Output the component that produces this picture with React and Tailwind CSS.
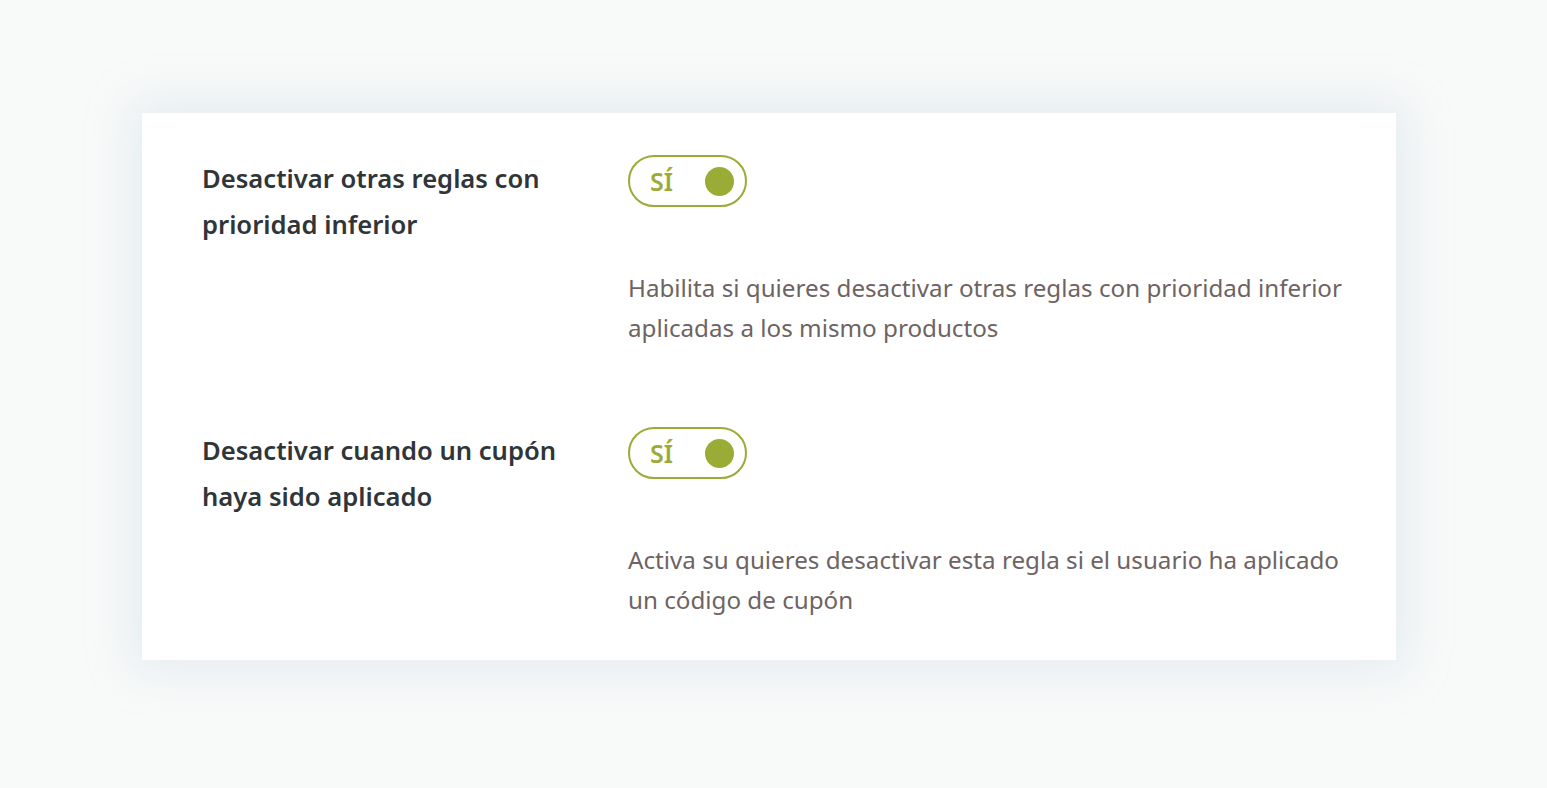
import { useState } from 'react'

const RULES = [
  {
    id: 'lower-priority',
    label: 'Desactivar otras reglas con prioridad inferior',
    help: 'Habilita si quieres desactivar otras reglas con prioridad inferior aplicadas a los mismo productos',
  },
  {
    id: 'coupon',
    label: 'Desactivar cuando un cupón haya sido aplicado',
    help: 'Activa su quieres desactivar esta regla si el usuario ha aplicado un código de cupón',
  },
]

function Toggle({ on, onChange }) {
  return (
    <button
      type="button"
      onClick={() => onChange(!on)}
      className="flex h-[52px] w-[119px] items-center justify-between rounded-full border-2 border-[#9bac36] bg-white pl-[20px] pr-[11px]"
    >
      <span className="text-[25px] font-semibold leading-none text-[#9bac36]">{on ? 'SÍ' : 'NO'}</span>
      <span className={on ? 'h-[29px] w-[29px] rounded-full bg-[#9bac36]' : 'h-[29px] w-[29px] rounded-full bg-gray-300'} />
    </button>
  )
}

export default function App() {
  const [values, setValues] = useState({ 'lower-priority': true, coupon: true })

  return (
    <div
      className="min-h-screen bg-[#f8f9f9] pl-[142px] pt-[113px]"
      style={{ fontFamily: '"Noto Sans", "Open Sans", sans-serif' }}
    >
      <div className="flex w-[1254px] flex-col gap-[79px] bg-white pb-[40px] pl-[60px] pr-[38px] pt-[42px] shadow-[0_0_40px_10px_rgba(200,218,228,0.4)]">
        {RULES.map((rule) => (
          <div key={rule.id} className="grid grid-cols-[426px_1fr]">
            <div className="w-[372px] pt-[1px] text-[25.6px] font-semibold leading-[46px] text-[#2f3538]">
              {rule.label}
            </div>
            <div className="flex flex-col items-start gap-[61px]">
              <Toggle
                on={values[rule.id]}
                onChange={(v) => setValues({ ...values, [rule.id]: v })}
              />
              <p className="text-[24.2px] leading-[40px] text-[#6e6363]">{rule.help}</p>
            </div>
          </div>
        ))}
      </div>
    </div>
  )
}
